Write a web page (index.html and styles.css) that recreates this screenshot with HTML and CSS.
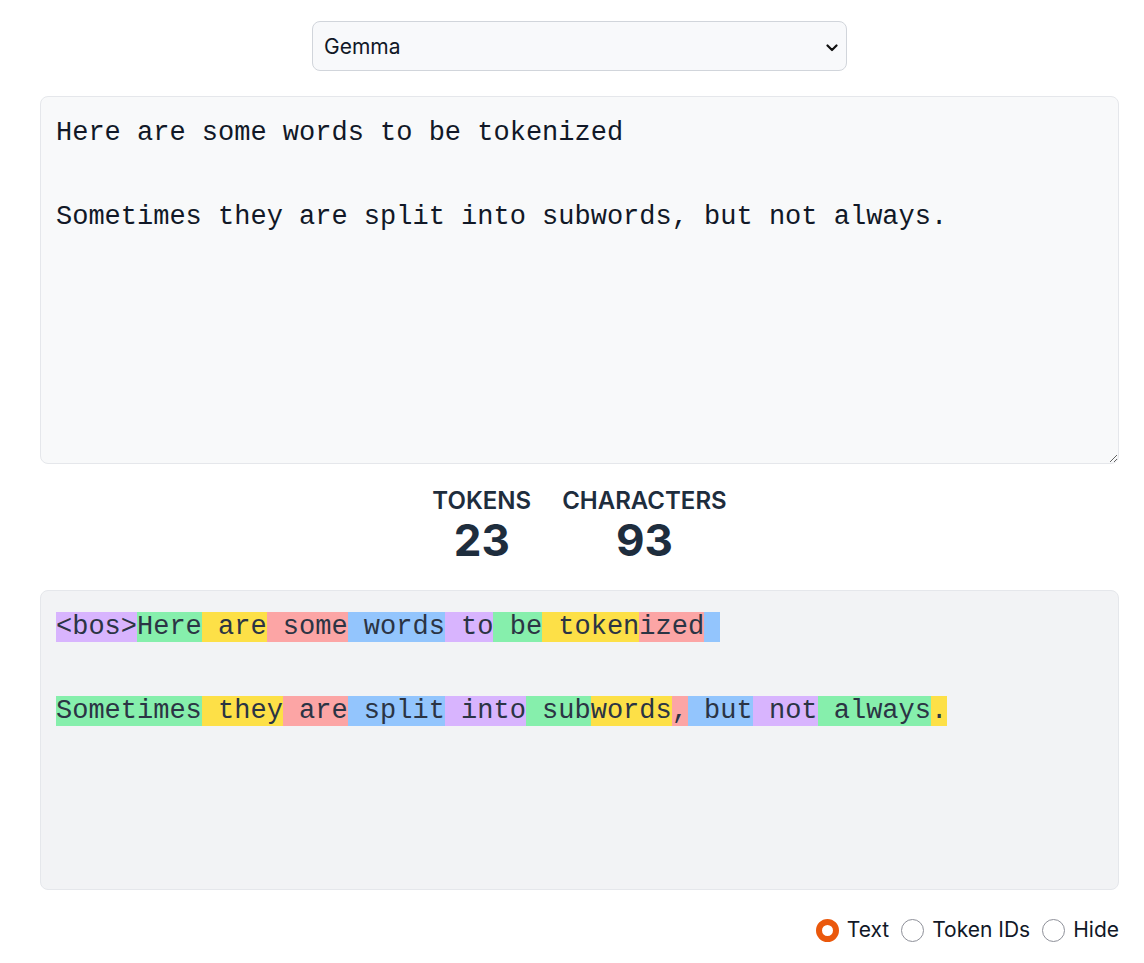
FILE: index.html
```html
<!DOCTYPE html>
<html lang="en">
<head>
<meta charset="utf-8">
<title>Tokenizer</title>
<link rel="stylesheet" href="styles.css">
</head>
<body>
<main class="page">
  <div class="select-wrap">
    <select class="model-select">
      <option>Gemma</option>
    </select>
    <svg class="chevron" width="12" height="8" viewBox="0 0 12 8" aria-hidden="true"><path d="M1.5 1.5 L6 6 L10.5 1.5" fill="none" stroke="#111" stroke-width="2.2" stroke-linecap="round" stroke-linejoin="round"/></svg>
  </div>

  <textarea class="input" spellcheck="false">Here are some words to be tokenized

Sometimes they are split into subwords, but not always.</textarea>

  <div class="stats">
    <div class="stat">
      <div class="stat-label">TOKENS</div>
      <div class="stat-value">23</div>
    </div>
    <div class="stat">
      <div class="stat-label">CHARACTERS</div>
      <div class="stat-value">93</div>
    </div>
  </div>

  <div class="output"><span class="tk p">&lt;bos&gt;</span><span class="tk g">Here</span><span class="tk y"> are</span><span class="tk r"> some</span><span class="tk b"> words</span><span class="tk p"> to</span><span class="tk g"> be</span><span class="tk y"> token</span><span class="tk r">ized</span><span class="tk b"> </span>
<span class="tk p"></span>
<span class="tk g">Sometimes</span><span class="tk y"> they</span><span class="tk r"> are</span><span class="tk b"> split</span><span class="tk p"> into</span><span class="tk g"> sub</span><span class="tk y">words</span><span class="tk r">,</span><span class="tk b"> but</span><span class="tk p"> not</span><span class="tk g"> always</span><span class="tk y">.</span></div>

  <div class="modes">
    <label class="mode"><input type="radio" name="mode" checked><span>Text</span></label>
    <label class="mode"><input type="radio" name="mode"><span>Token IDs</span></label>
    <label class="mode"><input type="radio" name="mode"><span>Hide</span></label>
  </div>
</main>
</body>
</html>
```

FILE: styles.css
```css
* { box-sizing: border-box; }

html, body {
  margin: 0;
  background: #ffffff;
}

body {
  font-family: Inter, "Noto Sans", "Liberation Sans", sans-serif;
  color: #111827;
}

.page {
  display: flex;
  flex-direction: column;
  padding: 21px 25px 0 40px;
}

.select-wrap {
  position: relative;
  align-self: center;
  width: 535px;
}

.model-select {
  appearance: none;
  -webkit-appearance: none;
  display: block;
  width: 100%;
  height: 50px;
  padding: 0 36px 0 11px;
  font-family: Inter, "Noto Sans", sans-serif;
  font-size: 21px;
  color: #111827;
  background: #f8f9fb;
  border: 1px solid #d1d5db;
  border-radius: 8px;
  outline: none;
}

.chevron {
  position: absolute;
  right: 9px;
  top: 23px;
  pointer-events: none;
}

.input {
  display: block;
  width: 100%;
  height: 368px;
  margin-top: 25px;
  padding: 15px 15px;
  font-family: "Liberation Mono", "DejaVu Sans Mono", monospace;
  font-size: 27px;
  line-height: 42px;
  color: #111827;
  background: #f8f9fa;
  border: 1px solid #e5e7eb;
  border-radius: 8px;
  outline: none;
  resize: vertical;
}

.stats {
  display: flex;
  justify-content: center;
  gap: 31px;
  margin-top: 24px;
  color: #1e2d3d;
}

.stat {
  display: flex;
  flex-direction: column;
  align-items: center;
}

.stat-label {
  font-size: 24px;
  line-height: 26px;
  font-weight: 600;
}

.stat-value {
  margin-top: 2px;
  font-size: 44px;
  line-height: 48px;
  font-weight: 700;
}

.output {
  height: 300px;
  margin-top: 26px;
  padding: 15px;
  font-family: "Liberation Mono", "DejaVu Sans Mono", monospace;
  font-size: 27px;
  line-height: 42px;
  color: #2b3444;
  white-space: pre;
  background: #f2f3f5;
  border: 1px solid #e5e7eb;
  border-radius: 8px;
  overflow: hidden;
}

.tk.p { background: #d8b4fe; }
.tk.g { background: #86efac; }
.tk.y { background: #fde047; }
.tk.r { background: #fca5a5; }
.tk.b { background: #93c5fd; }

.modes {
  display: flex;
  justify-content: flex-end;
  gap: 12px;
  margin-top: 28px;
}

.mode {
  display: flex;
  align-items: center;
  gap: 8px;
  font-size: 21px;
  line-height: 24px;
  color: #111827;
}

.mode input {
  appearance: none;
  -webkit-appearance: none;
  width: 23px;
  height: 23px;
  margin: 0;
  border: 1.5px solid #8e9099;
  border-radius: 50%;
  background: #fff;
}

.mode input:checked {
  border: 6px solid #ea580c;
}
```
